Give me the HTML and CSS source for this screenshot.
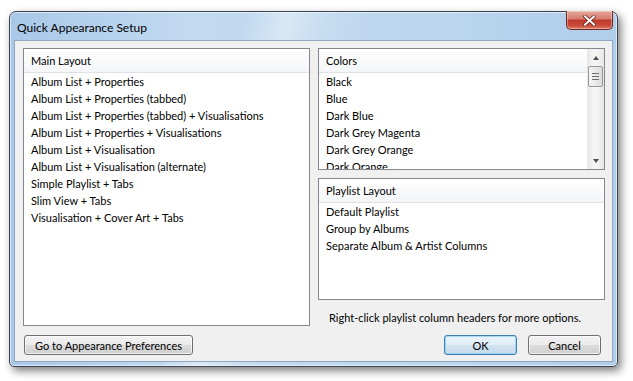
FILE: index.html
```html
<!DOCTYPE html>
<html lang="en">
<head>
    <meta charset="UTF-8">
    <meta name="viewport" content="width=device-width, initial-scale=1.0">
    <title>Quick Appearance Setup</title>
    <link rel="stylesheet" href="styles.css">
</head>
<body>
    <div class="desktop">
        <div class="window">
            <!-- Title bar -->
            <div class="titlebar">
                <span class="title">Quick Appearance Setup</span>
                <button class="close-btn" aria-label="Close">
                    <svg width="13" height="11" viewBox="0 0 13 11">
                        <path d="M2 1.5 L11 9.5 M11 1.5 L2 9.5" stroke="#5a1a12" stroke-width="3.4" stroke-linecap="square"/>
                        <path d="M2 1.5 L11 9.5 M11 1.5 L2 9.5" stroke="#ffffff" stroke-width="2" stroke-linecap="square"/>
                    </svg>
                </button>
            </div>

            <!-- Client area -->
            <div class="client">
                <div class="panes">
                    <!-- Left list -->
                    <div class="listbox main-layout">
                        <div class="list-header">Main Layout</div>
                        <ul class="list-items">
                            <li>Album List + Properties</li>
                            <li>Album List + Properties (tabbed)</li>
                            <li>Album List + Properties (tabbed) + Visualisations</li>
                            <li>Album List + Properties + Visualisations</li>
                            <li>Album List + Visualisation</li>
                            <li>Album List + Visualisation (alternate)</li>
                            <li>Simple Playlist + Tabs</li>
                            <li>Slim View + Tabs</li>
                            <li>Visualisation + Cover Art + Tabs</li>
                        </ul>
                    </div>

                    <!-- Right column -->
                    <div class="right-col">
                        <div class="listbox colors">
                            <div class="list-body">
                                <div class="list-header">Colors</div>
                                <ul class="list-items">
                                    <li>Black</li>
                                    <li>Blue</li>
                                    <li>Dark Blue</li>
                                    <li>Dark Grey Magenta</li>
                                    <li>Dark Grey Orange</li>
                                    <li>Dark Orange</li>
                                </ul>
                            </div>
                            <div class="scrollbar">
                                <div class="scroll-arrow"><span class="arrow-up"></span></div>
                                <div class="scroll-thumb">
                                    <span class="grip"></span>
                                    <span class="grip"></span>
                                    <span class="grip"></span>
                                </div>
                                <div class="scroll-track"></div>
                                <div class="scroll-arrow"><span class="arrow-down"></span></div>
                            </div>
                        </div>

                        <div class="listbox playlist">
                            <div class="list-header">Playlist Layout</div>
                            <ul class="list-items">
                                <li>Default Playlist</li>
                                <li>Group by Albums</li>
                                <li>Separate Album &amp; Artist Columns</li>
                            </ul>
                        </div>

                        <p class="hint">Right-click playlist column headers for more options.</p>
                    </div>
                </div>

                <!-- Buttons -->
                <div class="button-row">
                    <button class="btn btn-wide">Go to Appearance Preferences</button>
                    <div class="button-group">
                        <button class="btn btn-default">OK</button>
                        <button class="btn">Cancel</button>
                    </div>
                </div>
            </div>
        </div>
    </div>
</body>
</html>
```

FILE: styles.css
```css
body {
    margin: 0;
    padding: 0;
    background-color: #fff;
    font-family: "Segoe UI", Lato, "Noto Sans", sans-serif;
    font-size: 11px;
    color: #000;
}

.desktop {
    width: 633px;
    height: 381px;
    padding: 11px 0 0 9px;
    box-sizing: border-box;
    overflow: hidden;
}

.window {
    width: 609px;
    height: 356px;
    box-sizing: border-box;
    border: 1px solid #3b4450;
    border-radius: 7px 7px 5px 5px;
    background:
        linear-gradient(104deg, rgba(255, 255, 255, 0) 34%, rgba(255, 255, 255, 0.4) 40%, rgba(255, 255, 255, 0.1) 46%, rgba(255, 255, 255, 0) 52%),
        linear-gradient(to right, #a9c8e8, #c2daf0 30%, #bcd6ee 70%, #b0cdea);
    box-shadow: 3px 4px 9px rgba(0, 0, 0, 0.5), inset 0 0 0 1px rgba(255, 255, 255, 0.55);
    display: flex;
    flex-direction: column;
}

.titlebar {
    height: 28px;
    flex-shrink: 0;
    display: flex;
    justify-content: space-between;
    align-items: flex-start;
    padding: 0 4px 0 7px;
}

.title {
    align-self: center;
    font-size: 12px;
    color: #000;
    margin-top: 2px;
}

.close-btn {
    width: 47px;
    height: 19px;
    margin-top: -1px;
    border: 1px solid #6b2a22;
    border-top: none;
    border-radius: 0 0 5px 5px;
    background: linear-gradient(to bottom, #e8a89c 0%, #d47a6c 45%, #c0392b 50%, #c74a3b 80%, #e07a62 100%);
    box-shadow: inset 0 0 0 1px rgba(255, 255, 255, 0.35);
    display: flex;
    align-items: center;
    justify-content: center;
    padding: 0;
}

.client {
    height: 322px;
    flex-shrink: 0;
    margin: 0 4px;
    box-sizing: border-box;
    border: 1px solid #8fa7c2;
    background-color: #f0f0f0;
    padding: 7px 7px 6px 8px;
    display: flex;
    flex-direction: column;
}

.panes {
    height: 278px;
    flex-shrink: 0;
    display: flex;
    gap: 8px;
}

.listbox {
    box-sizing: border-box;
    border: 1px solid #828790;
    background-color: #fff;
    overflow: hidden;
    flex-shrink: 0;
}

.main-layout {
    width: 287px;
}

.right-col {
    width: 287px;
    display: flex;
    flex-direction: column;
    gap: 8px;
}

.colors {
    height: 122px;
    display: flex;
}

.colors .list-body {
    flex: 1;
    overflow: hidden;
}

.playlist {
    height: 122px;
}

.list-header {
    height: 23px;
    line-height: 23px;
    padding-left: 7px;
    background: linear-gradient(to bottom, #ffffff, #f4f5f7);
    border-bottom: 1px solid #dfe2e6;
}

.list-items {
    list-style: none;
    margin: 0;
    padding: 0;
}

.list-items li {
    height: 17px;
    line-height: 17px;
    padding-left: 7px;
    white-space: nowrap;
}

.scrollbar {
    width: 17px;
    display: flex;
    flex-direction: column;
    background: linear-gradient(to right, #e6e6e6, #f5f5f5 40%, #f5f5f5 60%, #e6e6e6);
}

.scroll-arrow {
    height: 17px;
    display: flex;
    align-items: center;
    justify-content: center;
}

.arrow-up {
    width: 0;
    height: 0;
    border-left: 3.5px solid transparent;
    border-right: 3.5px solid transparent;
    border-bottom: 4px solid #4f4f4f;
}

.arrow-down {
    width: 0;
    height: 0;
    border-left: 3.5px solid transparent;
    border-right: 3.5px solid transparent;
    border-top: 4px solid #4f4f4f;
}

.scroll-thumb {
    height: 21px;
    margin: 0 1px;
    box-sizing: border-box;
    border: 1px solid #979797;
    border-radius: 2px;
    background: linear-gradient(to right, #f4f4f4, #e9e9e9 50%, #dcdcdc);
    display: flex;
    flex-direction: column;
    align-items: center;
    justify-content: center;
    gap: 2px;
}

.grip {
    width: 7px;
    height: 1px;
    background-color: #6f6f6f;
}

.scroll-track {
    flex: 1;
}

.hint {
    flex: 1;
    margin: 0;
    padding-left: 11px;
    white-space: nowrap;
    display: flex;
    align-items: center;
}

.button-row {
    margin-top: 9px;
    padding: 0 4px 0 1px;
    display: flex;
    justify-content: space-between;
}

.button-group {
    display: flex;
    gap: 11px;
}

.btn {
    height: 20px;
    width: 73px;
    padding: 0;
    font-family: inherit;
    font-size: 11px;
    color: #000;
    border: 1px solid #707070;
    border-radius: 3px;
    background: linear-gradient(to bottom, #f2f2f2 0%, #ebebeb 50%, #dddddd 51%, #cfcfcf 100%);
    box-shadow: inset 0 0 0 1px rgba(255, 255, 255, 0.7);
}

.btn-wide {
    width: 169px;
}

.btn-default {
    border-color: #3c7fb1;
    background: linear-gradient(to bottom, #eaf3fa 0%, #e1edf7 50%, #d3e3f0 51%, #c7dbec 100%);
    box-shadow: inset 0 0 0 1px rgba(120, 200, 240, 0.6);
}
```
